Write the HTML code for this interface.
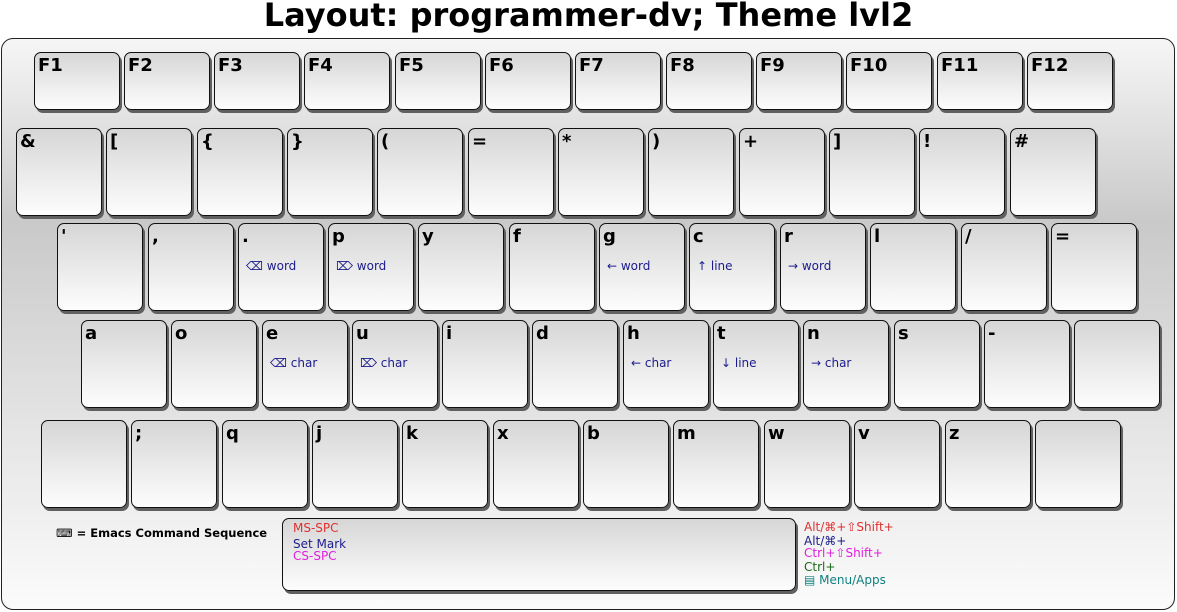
<!DOCTYPE html>
<html><head><meta charset="utf-8"><style>
body{margin:0;width:1177px;height:612px;background:#fff;position:relative;overflow:hidden;font-family:"DejaVu Sans","Liberation Sans",sans-serif}
h1{position:absolute;left:0;top:-4px;width:1177px;margin:0;text-align:center;font:bold 32px "DejaVu Sans",sans-serif;color:#000}
.b{position:absolute;left:1px;top:38px;width:1172px;height:570px;border:1.5px solid #222;border-radius:12px;background:linear-gradient(#f6f6f6 0%,#c9c9c9 32%,#e6e6e6 70%,#fbfbfb 100%)}
.k{position:absolute;box-sizing:border-box;width:86px;height:88px;border:1.5px solid #111;border-radius:7px;background:linear-gradient(#d6d6d6,#fdfdfd);box-shadow:2px 3px 0 #606060}
.f{height:58px}
.l{position:absolute;left:3px;top:2px;font:bold 18px "DejaVu Sans",sans-serif;color:#000}
.s{position:absolute;left:7px;top:35px;font:12px "DejaVu Sans",sans-serif;color:#1c1c8c;white-space:nowrap}
.t{position:absolute;font:12px "DejaVu Sans",sans-serif;white-space:nowrap}
</style></head><body>
<h1>Layout: programmer-dv; Theme lvl2</h1>
<div class="b"></div>
<div class="k f" style="left:34px;top:52px"><span class="l">F1</span></div>
<div class="k f" style="left:124px;top:52px"><span class="l">F2</span></div>
<div class="k f" style="left:214px;top:52px"><span class="l">F3</span></div>
<div class="k f" style="left:304px;top:52px"><span class="l">F4</span></div>
<div class="k f" style="left:395px;top:52px"><span class="l">F5</span></div>
<div class="k f" style="left:485px;top:52px"><span class="l">F6</span></div>
<div class="k f" style="left:575px;top:52px"><span class="l">F7</span></div>
<div class="k f" style="left:666px;top:52px"><span class="l">F8</span></div>
<div class="k f" style="left:756px;top:52px"><span class="l">F9</span></div>
<div class="k f" style="left:846px;top:52px"><span class="l">F10</span></div>
<div class="k f" style="left:937px;top:52px"><span class="l">F11</span></div>
<div class="k f" style="left:1027px;top:52px"><span class="l">F12</span></div>
<div class="k" style="left:16px;top:128px"><span class="l">&amp;</span></div>
<div class="k" style="left:106px;top:128px"><span class="l">[</span></div>
<div class="k" style="left:197px;top:128px"><span class="l">{</span></div>
<div class="k" style="left:287px;top:128px"><span class="l">}</span></div>
<div class="k" style="left:377px;top:128px"><span class="l">(</span></div>
<div class="k" style="left:468px;top:128px"><span class="l">=</span></div>
<div class="k" style="left:558px;top:128px"><span class="l">*</span></div>
<div class="k" style="left:648px;top:128px"><span class="l">)</span></div>
<div class="k" style="left:739px;top:128px"><span class="l">+</span></div>
<div class="k" style="left:829px;top:128px"><span class="l">]</span></div>
<div class="k" style="left:919px;top:128px"><span class="l">!</span></div>
<div class="k" style="left:1010px;top:128px"><span class="l">#</span></div>
<div class="k" style="left:57px;top:223px"><span class="l">'</span></div>
<div class="k" style="left:148px;top:223px"><span class="l">,</span></div>
<div class="k" style="left:238px;top:223px"><span class="l">.</span><span class="s">⌫ word</span></div>
<div class="k" style="left:328px;top:223px"><span class="l">p</span><span class="s">⌦ word</span></div>
<div class="k" style="left:418px;top:223px"><span class="l">y</span></div>
<div class="k" style="left:509px;top:223px"><span class="l">f</span></div>
<div class="k" style="left:599px;top:223px"><span class="l">g</span><span class="s">← word</span></div>
<div class="k" style="left:689px;top:223px"><span class="l">c</span><span class="s">↑ line</span></div>
<div class="k" style="left:780px;top:223px"><span class="l">r</span><span class="s">→ word</span></div>
<div class="k" style="left:870px;top:223px"><span class="l">l</span></div>
<div class="k" style="left:961px;top:223px"><span class="l">/</span></div>
<div class="k" style="left:1051px;top:223px"><span class="l">=</span></div>
<div class="k" style="left:81px;top:320px"><span class="l">a</span></div>
<div class="k" style="left:171px;top:320px"><span class="l">o</span></div>
<div class="k" style="left:262px;top:320px"><span class="l">e</span><span class="s">⌫ char</span></div>
<div class="k" style="left:352px;top:320px"><span class="l">u</span><span class="s">⌦ char</span></div>
<div class="k" style="left:442px;top:320px"><span class="l">i</span></div>
<div class="k" style="left:532px;top:320px"><span class="l">d</span></div>
<div class="k" style="left:623px;top:320px"><span class="l">h</span><span class="s">← char</span></div>
<div class="k" style="left:713px;top:320px"><span class="l">t</span><span class="s">↓ line</span></div>
<div class="k" style="left:803px;top:320px"><span class="l">n</span><span class="s">→ char</span></div>
<div class="k" style="left:894px;top:320px"><span class="l">s</span></div>
<div class="k" style="left:984px;top:320px"><span class="l">-</span></div>
<div class="k" style="left:1074px;top:320px"></div>
<div class="k" style="left:41px;top:420px"></div>
<div class="k" style="left:131px;top:420px"><span class="l">;</span></div>
<div class="k" style="left:222px;top:420px"><span class="l">q</span></div>
<div class="k" style="left:312px;top:420px"><span class="l">j</span></div>
<div class="k" style="left:402px;top:420px"><span class="l">k</span></div>
<div class="k" style="left:493px;top:420px"><span class="l">x</span></div>
<div class="k" style="left:583px;top:420px"><span class="l">b</span></div>
<div class="k" style="left:673px;top:420px"><span class="l">m</span></div>
<div class="k" style="left:764px;top:420px"><span class="l">w</span></div>
<div class="k" style="left:854px;top:420px"><span class="l">v</span></div>
<div class="k" style="left:945px;top:420px"><span class="l">z</span></div>
<div class="k" style="left:1035px;top:420px"></div>
<div class="k" style="left:282px;top:518px;width:514px;height:73px">
<span class="t" style="left:10px;top:2px;color:#e03030">MS-SPC</span>
<span class="t" style="left:10px;top:18px;color:#1c1c8c">Set Mark</span>
<span class="t" style="left:10px;top:30px;color:#e020e0">CS-SPC</span>
</div>
<span class="t" style="left:56px;top:526px;font-weight:bold;font-size:11.5px;color:#000">⌨ = Emacs Command Sequence</span>
<span class="t" style="left:804px;top:520px;color:#e03030">Alt/⌘+⇧Shift+</span>
<span class="t" style="left:804px;top:534px;color:#1c1c8c">Alt/⌘+</span>
<span class="t" style="left:804px;top:546px;color:#e020e0">Ctrl+⇧Shift+</span>
<span class="t" style="left:804px;top:560px;color:#1a6a1a">Ctrl+</span>
<span class="t" style="left:804px;top:573px;color:#108080">▤ Menu/Apps</span>
</body></html>
